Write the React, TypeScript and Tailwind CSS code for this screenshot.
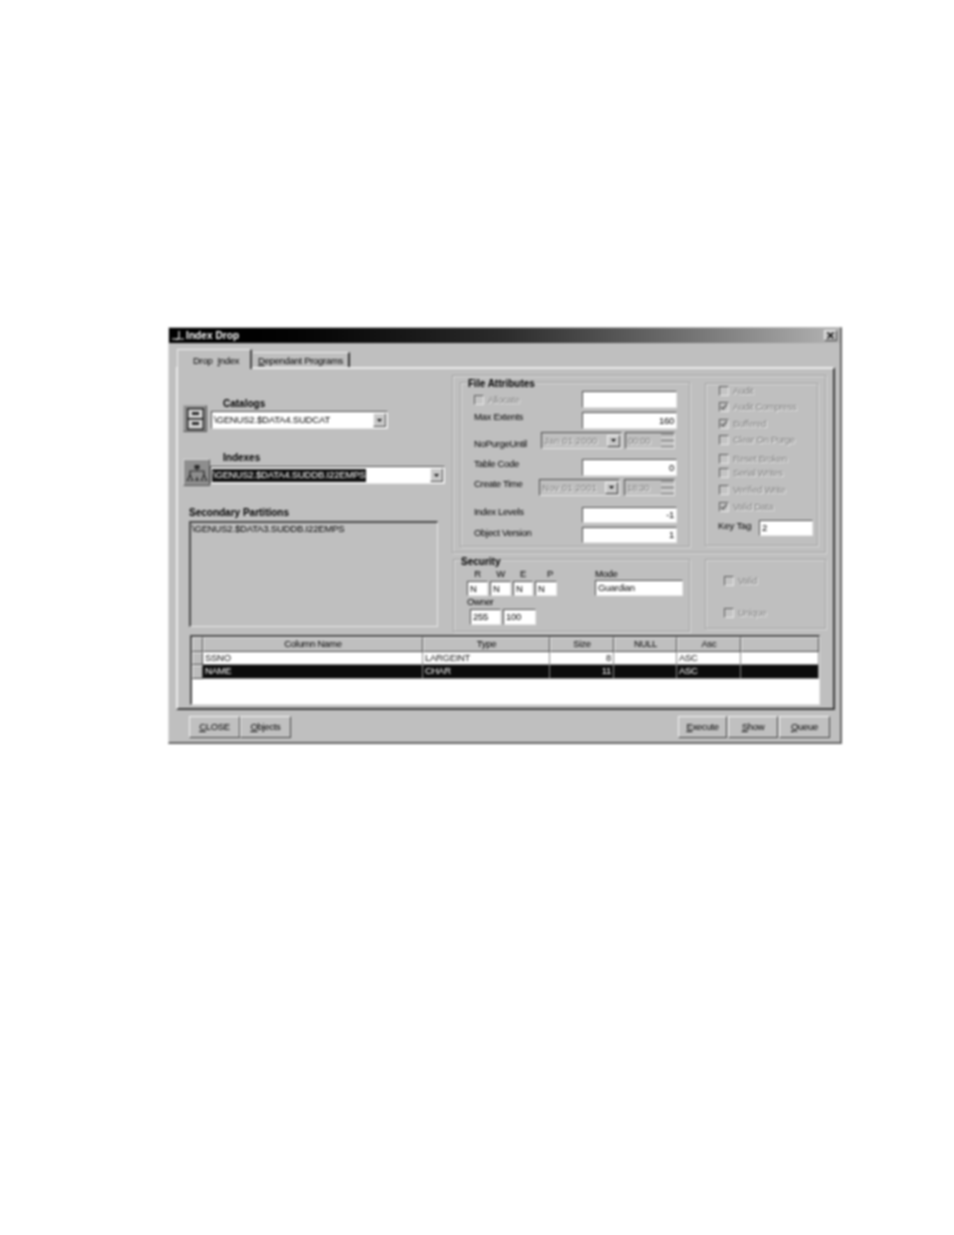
import React from "react";

const font = "font-['Liberation_Sans',Arial,sans-serif]";
const sunken = "border border-t-[#4a4a4a] border-l-[#4a4a4a] border-r-[#e8e8e8] border-b-[#e8e8e8]";
const raised = "border border-t-[#f4f4f4] border-l-[#f4f4f4] border-r-[#444] border-b-[#444]";
const etched = "border border-[#a0a0a0] shadow-[1px_1px_0_#dcdcdc,inset_1px_1px_0_#dcdcdc]";
const disabledText = "text-[#7c7c7c] [text-shadow:1px_1px_0_#f4f4f4]";
const heading = "text-[10px] tracking-normal font-bold text-black";

const Field: React.FC<{ value?: string; right?: boolean; className: string }> = ({ value, right, className }) => (
  <div className={`${sunken} ${className} bg-white flex items-center px-[2px] text-black ${right ? "justify-end" : ""}`}>
    {value}
  </div>
);

const Arrow: React.FC<{ className?: string }> = ({ className = "" }) => (
  <div className={`${raised} ${className} bg-[#c8c8c8] flex items-center justify-center`}>
    <svg width="5" height="3" viewBox="0 0 5 3">
      <path d="M0 0h5L2.5 3z" fill="#111" />
    </svg>
  </div>
);

const Combo: React.FC<{ value: string; selected?: boolean; className: string }> = ({ value, selected, className }) => (
  <div className={`${sunken} ${className} h-[18px] bg-white flex items-center justify-between pl-[1px] pr-[1px] text-black tracking-[-0.18px]`}>
    <span className={selected ? "bg-[#111] text-white px-[1px] h-[13px] flex items-center" : "px-[1px]"}>{value}</span>
    <Arrow className="w-[13px] h-[14px]" />
  </div>
);

const DisabledDate: React.FC<{ date: string; time: string; dateW: string; timeW: string; gap: string }> = ({ date, time, dateW, timeW, gap }) => (
  <div className={`flex ${gap} h-[17px] ${disabledText}`}>
    <div className={`${sunken} ${dateW} flex items-center justify-between pl-[2px] pr-[1px]`}>
      <span className="tracking-[0.1px]">{date}</span>
      <Arrow className="w-[13px] h-[12px]" />
    </div>
    <div className={`${sunken} ${timeW} flex items-center justify-between pl-[2px]`}>
      <span>{time}</span>
      <div className="flex flex-col w-[13px] h-[13px] border-y border-[#777] bg-[#c8c8c8]">
        <div className="flex-1 border-b border-[#666]" />
        <div className="flex-1" />
      </div>
    </div>
  </div>
);

const Check: React.FC<{ label: string; checked?: boolean; className?: string }> = ({ label, checked, className = "" }) => (
  <div className={`flex items-center h-[14px] ${className}`}>
    <div className="border border-t-[#5a5a5a] border-l-[#5a5a5a] border-r-[#e8e8e8] border-b-[#e8e8e8] w-[10px] h-[10px] bg-[#c4c4c4] flex items-center justify-center">
      {checked && (
        <svg width="8" height="8" viewBox="0 0 8 8">
          <path d="M1 4l2 2 4-5" stroke="#666" strokeWidth="1.6" fill="none" />
        </svg>
      )}
    </div>
    <span className={`ml-[4px] ${disabledText}`}>{label}</span>
  </div>
);

const CabinetIcon = () => (
  <svg width="17" height="22" viewBox="0 0 17 22">
    <rect x="0.7" y="0.7" width="15.6" height="20.6" fill="#d4d4d4" stroke="#1c1c1c" strokeWidth="1.4" />
    <rect x="1" y="10" width="15" height="1.6" fill="#1c1c1c" />
    <rect x="5" y="4" width="7" height="3" fill="#2c2c2c" />
    <rect x="5" y="14" width="7" height="3" fill="#2c2c2c" />
  </svg>
);

const TreeIcon = () => (
  <svg width="22" height="16" viewBox="0 0 22 16">
    <path d="M11 3v3M4 10V6h14v4" stroke="#2a2a2a" strokeWidth="1.2" fill="none" />
    <rect x="8.5" y="0" width="5" height="4" fill="#2a2a2a" />
    <path d="M1 16l3-6 3 6zM15 16l3-6 3 6z" fill="none" stroke="#2c2c2c" strokeWidth="1.2" />
    <path d="M9 16l2-5 2 5z" fill="#3a3a3a" />
  </svg>
);

const columns = "grid grid-cols-[11px_220px_127px_64px_63px_64px_1fr]";
const headers = ["", "Column Name", "Type", "Size", "NULL", "Asc", ""];

const DataRow: React.FC<{ cells: string[]; selected?: boolean; height: string }> = ({ cells, selected, height }) => (
  <div className={`${columns} ${height}`}>
    <div className={`${raised} bg-[#bdbdbd]`} />
    {cells.map((c, i) => (
      <div
        key={i}
        className={`flex items-center px-[2px] pb-[1px] border-r border-b border-[#8a8a8a] ${i === 2 ? "justify-end" : ""} ${
          selected ? "bg-[#0c0c0c] text-white" : "bg-white text-[#111]"
        }`}
      >
        {c}
      </div>
    ))}
  </div>
);

const Button: React.FC<{ hot: string; rest: string; className: string }> = ({ hot, rest, className }) => (
  <div className={`${raised} ${className} h-[22px] pb-[1px] flex items-center justify-center text-black bg-[#c0c0c0]`}>
    <span>
      <span className="underline">{hot}</span>
      {rest}
    </span>
  </div>
);

export default function App() {
  return (
    <div className={`min-h-[1235px] bg-white pt-[327px] pl-[168px] text-[9.5px] tracking-[-0.3px] leading-none ${font}`}>
      <div className="w-[674px] h-[417px] blur-[0.8px] bg-[#bfbfbf] border-t border-l border-t-[#bbb] border-l-[#ddd] border-r-2 border-b-2 border-r-[#666] border-b-[#666]">
        {/* title bar */}
        <div className="h-[15px] flex items-center justify-between bg-gradient-to-r from-[#000] via-[#2c2c2c] to-[#b4b4b4] pl-[2px] pr-[3px]">
          <div className="flex items-center">
            <svg width="14" height="11" viewBox="0 0 14 11">
              <path d="M8 1v6c0 2-2 3-4 2M1 9h12" stroke="#eee" strokeWidth="1.2" fill="none" />
            </svg>
            <span className="ml-[1px] text-[10px] tracking-[0.1px] font-bold text-white">Index Drop</span>
          </div>
          <div className={`${raised} w-[13px] h-[11px] bg-[#c4c4c4] flex items-center justify-center`}>
            <svg width="7" height="7" viewBox="0 0 7 7">
              <path d="M0.5 0.5l6 6M6.5 0.5l-6 6" stroke="#000" strokeWidth="1.4" />
            </svg>
          </div>
        </div>

        {/* tabs */}
        <div className="h-[24px] flex items-end ml-[8px] text-black">
          <div className="relative z-10 -mb-[2px] w-[75px] h-[20px] pt-[2px] flex items-center pl-[15px] bg-[#bfbfbf] border-t border-l border-t-[#f0f0f0] border-l-[#f0f0f0] border-r-2 border-r-[#444]">
            Drop <span className="ml-[5px]"><span className="underline">I</span>ndex</span>
          </div>
          <div className="ml-[1px] w-[97px] h-[15px] pt-[2px] flex items-center justify-center border-t border-t-[#f0f0f0] border-r-2 border-r-[#333]">
            <span><span className="underline">D</span>ependant Programs</span>
          </div>
        </div>

        {/* tab panel */}
        <div className="ml-[7px] w-[659px] h-[343px] border-2 border-t-[#ececec] border-l-[#ececec] border-r-[#3c3c3c] border-b-[#3c3c3c]">
          <div className="flex h-[261px]">
            {/* left column */}
            <div className="w-[274px]">
              <div className={`ml-[45px] mt-[30px] h-[11px] ${heading}`}>Catalogs</div>
              <div className="flex -mt-[5px] ml-[5px] h-[28px]">
                <div className="border border-t-[#aaa] border-l-[#aaa] border-r-[#555] border-b-[#555] w-[24px] h-[27px] flex items-center justify-center bg-[#8c8c8c]">
                  <CabinetIcon />
                </div>
                <Combo value="\GENUS2.$DATA4.SUDCAT" className="w-[177px] mt-[6px] ml-[4px]" />
              </div>
              <div className={`ml-[45px] mt-[20px] h-[11px] ${heading}`}>Indexes</div>
              <div className="flex -mt-[5px] ml-[5px] h-[27px]">
                <div className="border border-t-[#d8d8d8] border-l-[#d8d8d8] border-r-[#555] border-b-[#555] w-[27px] h-[27px] flex items-center justify-center bg-[#8e8e8e]">
                  <TreeIcon />
                </div>
                <Combo value="\GENUS2.$DATA4.SUDDB.I22EMPS" selected className="w-[235px] mt-[7px]" />
              </div>
              <div className={`ml-[11px] mt-[22px] h-[11px] ${heading}`}>Secondary Partitions</div>
              <div className={`ml-[11px] mt-[2px] w-[249px] h-[106px] ${sunken} border-t-2 border-l-2 p-[1px] text-black tracking-[-0.18px]`}>
                \GENUS2.$DATA3.SUDDB.I22EMPS
              </div>
            </div>

            {/* right column */}
            <div className="mt-[6px]">
              <div className={`${etched} w-[374px] h-[178px] flex`}>
                <div className={`${etched} relative ml-[7px] mt-[6px] w-[230px] h-[165px] pl-[13px]`}>
                  <span className={`absolute -top-[4px] left-[6px] px-[1px] bg-[#bfbfbf] ${heading}`}>File Attributes</span>
                  <div className="flex items-center mt-[8px] h-[17px]">
                    <div className="w-[108px]">
                      <Check label="Allocate" />
                    </div>
                    <Field className="w-[95px] h-[17px]" />
                  </div>
                  <div className="flex items-center mt-[4px] h-[17px]">
                    <span className="w-[108px] mb-[7px] text-black">Max Extents</span>
                    <Field value="160" right className="w-[95px] h-[17px]" />
                  </div>
                  <div className="flex items-center mt-[3px] h-[17px]">
                    <span className="w-[67px] mt-[6px] whitespace-nowrap text-black">NoPurgeUntil</span>
                    <DisabledDate date="Jan 01 2000" time="00:00" dateW="w-[81px]" timeW="w-[50px]" gap="gap-[3px]" />
                  </div>
                  <div className="flex items-center mt-[10px] h-[17px]">
                    <span className="w-[108px] mb-[7px] text-black">Table Code</span>
                    <Field value="0" right className="w-[95px] h-[17px]" />
                  </div>
                  <div className="flex items-center mt-[3px] h-[17px]">
                    <span className="w-[65px] mb-[7px] whitespace-nowrap text-black">Create Time</span>
                    <DisabledDate date="Nov 01 2001" time="18:30" dateW="w-[81px]" timeW="w-[51px]" gap="gap-[4px]" />
                  </div>
                  <div className="flex items-center mt-[11px] h-[16px]">
                    <span className="w-[108px] mb-[6px] text-black">Index Levels</span>
                    <Field value="-1" right className="w-[95px] h-[16px]" />
                  </div>
                  <div className="flex items-center mt-[4px] h-[16px]">
                    <span className="w-[108px] mb-[5px] text-black">Object Version</span>
                    <Field value="1" right className="w-[95px] h-[16px]" />
                  </div>
                </div>

                <div className={`${etched} ml-[15px] mt-[7px] w-[113px] h-[163px] pl-[13px]`}>
                  <Check label="Audit" />
                  <Check label="Audit Compress" checked className="mt-[2px]" />
                  <Check label="Buffered" checked className="mt-[3px]" />
                  <Check label="Clear On Purge" className="mt-[2px]" />
                  <Check label="Reset Broken" className="mt-[5px]" />
                  <Check label="Serial Writes" />
                  <Check label="Verified Write" className="mt-[3px]" />
                  <Check label="Valid Data" checked className="mt-[3px]" />
                  <div className="flex items-center mt-[6px] h-[16px]">
                    <span className="w-[40px] text-black mb-[5px] tracking-[-0.1px] -ml-[1px] mr-[1px]">Key Tag</span>
                    <Field value="2" className="w-[54px] h-[16px]" />
                  </div>
                </div>
              </div>

              <div className="flex mt-[6px]">
                <div className={`${etched} relative ml-[1px] w-[237px] h-[73px] flex`}>
                  <span className={`absolute -top-[3px] left-[6px] px-[1px] bg-[#bfbfbf] ${heading}`}>Security</span>
                  <div className="ml-[13px] mt-[9px] text-black">
                    <div className="flex gap-[2px] h-[12px]">
                      <span className="w-[21px] text-center">R</span>
                      <span className="w-[21px] text-center">W</span>
                      <span className="w-[20px] text-center">E</span>
                      <span className="w-[22px] text-center pl-[8px]">P</span>
                    </div>
                    <div className="flex gap-[2px]">
                      <Field value="N" className="w-[21px] h-[15px]" />
                      <Field value="N" className="w-[21px] h-[15px]" />
                      <Field value="N" className="w-[20px] h-[15px]" />
                      <Field value="N" className="w-[22px] h-[15px]" />
                    </div>
                    <div className="h-[10px] pt-[1px]">Owner</div>
                    <div className="flex gap-[2px] mt-[3px] ml-[3px]">
                      <Field value="255" className="w-[31px] h-[16px]" />
                      <Field value="100" className="w-[33px] h-[16px]" />
                    </div>
                  </div>
                  <div className="ml-[38px] mt-[9px] text-black">
                    <div className="h-[11px]">Mode</div>
                    <Field value="Guardian" className="w-[88px] h-[16px]" />
                  </div>
                </div>
                <div className={`${etched} ml-[15px] w-[121px] h-[70px] pl-[18px] pt-[14px]`}>
                  <Check label="Valid" />
                  <Check label="Unique" className="mt-[18px]" />
                </div>
              </div>
            </div>
          </div>

          {/* column grid */}
          <div className={`${sunken} border-t-2 border-l-2 ml-[12px] mt-[5px] w-[630px] h-[70px] bg-white`}>
            <div className={`${columns} h-[15px] bg-[#bfbfbf] text-black`}>
              {headers.map((h, i) => (
                <div key={i} className={`${raised} pb-[1px] flex items-center justify-center`}>
                  {h}
                </div>
              ))}
            </div>
            <DataRow cells={["SSNO", "LARGEINT", "8", "", "ASC", ""]} height="h-[13px]" />
            <DataRow cells={["NAME", "CHAR", "11", "", "ASC", ""]} selected height="h-[14px]" />
          </div>
        </div>

        {/* footer buttons */}
        <div className="flex justify-between mt-[6px] pl-[20px] pr-[10px]">
          <div className="flex">
            <Button hot="C" rest="LOSE" className="w-[51px]" />
            <Button hot="O" rest="bjects" className="w-[51px]" />
          </div>
          <div className="flex gap-[1px]">
            <Button hot="E" rest="xecute" className="w-[49px]" />
            <Button hot="S" rest="how" className="w-[50px]" />
            <Button hot="Q" rest="ueue" className="w-[51px]" />
          </div>
        </div>
      </div>
    </div>
  );
}
